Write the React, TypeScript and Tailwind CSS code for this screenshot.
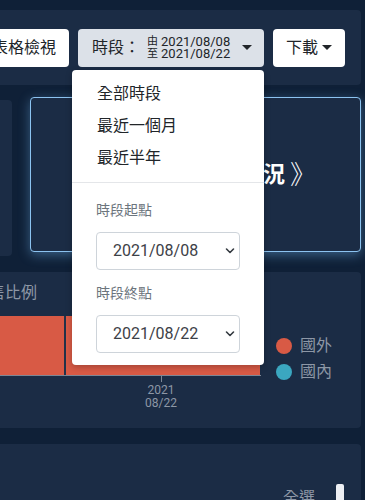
import React from "react";

const font = { fontFamily: "Roboto, 'Noto Sans CJK TC', sans-serif" };

const Caret = () => (
  <span className="inline-block w-0 h-0 border-l-[5px] border-r-[5px] border-t-[5px] border-l-transparent border-r-transparent border-t-[#212529]" />
);

const Chevron = () => (
  <svg width="10" height="7" viewBox="0 0 10 7" className="pointer-events-none absolute right-[5px] top-1/2 -translate-y-1/2">
    <path d="M1.5 1.5 L5 5 L8.5 1.5" fill="none" stroke="#343a40" strokeWidth="1.6" strokeLinecap="round" strokeLinejoin="round" />
  </svg>
);

const DateSelect = ({ value }: { value: string }) => (
  <div className="relative w-[144px] h-[38px]">
    <select
      defaultValue={value}
      className="appearance-none w-full h-full rounded-[4px] border border-[#ced4da] bg-white pl-[16px] text-[16px] text-[#3d4147] outline-none"
      style={font}
    >
      <option>2021/08/08</option>
      <option>2021/08/15</option>
      <option>2021/08/22</option>
    </select>
    <Chevron />
  </div>
);

export default function App() {
  return (
    <div className="w-[365px] h-[500px] overflow-hidden bg-[#0f2037]" style={font}>
      <div className="ml-[-40px] w-[401px] pt-[10px] flex flex-col">
        {/* toolbar */}
        <div className="relative z-20 h-[75px] rounded-[4px] bg-[#1b2c45] flex items-center justify-end gap-[9px] pr-[16px]">
          <button className="h-[38px] px-[13px] rounded-[4px] bg-white text-[16px] text-[#212529] whitespace-nowrap">表格檢視</button>
          <div className="relative">
            <button className="w-[186px] h-[38px] rounded-[4px] bg-[#dce1e8] flex items-center pl-[14px] pr-[12px] text-[#212529]">
              <span className="text-[16px] whitespace-nowrap">時段：</span>
              <span className="ml-[7px] flex flex-col items-start text-[13px] leading-[12px]">
                <span className="flex items-center gap-[3px]"><span className="text-[11px] leading-[12px]">由</span>2021/08/08</span>
                <span className="flex items-center gap-[3px]"><span className="text-[11px] leading-[12px]">至</span>2021/08/22</span>
              </span>
              <span className="ml-auto flex items-center"><Caret /></span>
            </button>
            {/* dropdown */}
            <div className="absolute right-0 top-[41px] w-[192px] rounded-[4px] bg-white py-[8px] shadow-[0_2px_6px_rgba(0,0,0,0.25)]">
              <div className="h-[32px] flex items-center px-[25px] text-[16px] text-[#212529]">全部時段</div>
              <div className="h-[32px] flex items-center px-[25px] text-[16px] text-[#212529]">最近一個月</div>
              <div className="h-[32px] flex items-center px-[25px] text-[16px] text-[#212529]">最近半年</div>
              <div className="my-[8px] border-t border-[#e4e6e9]" />
              <div className="px-[24px] pt-[9px] flex flex-col">
                <div className="h-[21px] text-[14px] text-[#6c757d] leading-[21px]">時段起點</div>
                <div className="mt-[11px]"><DateSelect value="2021/08/08" /></div>
                <div className="mt-[13px] h-[21px] text-[14px] text-[#6c757d] leading-[21px]">時段終點</div>
                <div className="mt-[11px] mb-[4px]"><DateSelect value="2021/08/22" /></div>
              </div>
            </div>
          </div>
          <button className="w-[72px] h-[38px] rounded-[4px] bg-white flex items-center justify-center gap-[4px] text-[16px] text-[#212529]">
            下載<Caret />
          </button>
        </div>

        {/* cards row */}
        <div className="mt-[12px] flex items-start gap-[18px]">
          <div className="mt-[3px] w-[52px] h-[156px] rounded-[4px] bg-[#1b2c45]" />
          <div className="w-[331px] h-[155px] pl-[12px] rounded-[4px] border border-[#8cc3f0] bg-[#1b2c45] shadow-[0_3px_12px_rgba(110,175,230,0.45)] flex items-center justify-center">
            <span className="flex items-center text-white whitespace-nowrap">
              <span className="text-[22px] font-bold">查看國內外銷售狀況</span>
              <span className="ml-[5px] text-[26px] leading-[26px] font-light">》</span>
            </span>
          </div>
        </div>

        {/* chart panel */}
        <div className="mt-[16px] h-[156px] rounded-[4px] bg-[#1b2c45] pl-[13px] pt-[11px]">
          <div className="text-[16px] leading-[20px] text-[#8d97a6]">銷售比例</div>
          <div className="mt-[13px] flex">
            <div className="w-[288px] flex flex-col">
              <div className="h-[59px] flex">
                <div className="w-[91px] bg-[#d85a45]" />
                <div className="w-[2px] bg-[#22324a]" />
                <div className="w-[194px] bg-[#d85a45]" />
              </div>
              <div className="h-[1px] bg-[#7d8795]" />
              <div className="ml-[147px] w-[82px] flex flex-col items-center">
                <div className="w-[1px] h-[6px] bg-[#7d8795]" />
                <div className="mt-[2px] text-[12px] leading-[13px] text-[#8d97a6] text-center">2021<br />08/22</div>
              </div>
            </div>
            <div className="ml-[15px] mt-[20px] flex flex-col gap-[6px]">
              <div className="flex items-center gap-[8px]">
                <span className="w-[16px] h-[16px] rounded-full bg-[#d85a45]" />
                <span className="text-[16px] leading-[20px] text-[#8d97a6]">國外</span>
              </div>
              <div className="flex items-center gap-[8px]">
                <span className="w-[16px] h-[16px] rounded-full bg-[#3ba7c0]" />
                <span className="text-[16px] leading-[20px] text-[#8d97a6]">國內</span>
              </div>
            </div>
          </div>
        </div>

        {/* bottom panel */}
        <div className="mt-[16px] h-[80px] rounded-[4px] bg-[#1b2c45] flex items-start justify-end pr-[17px] pt-[40px]">
          <span className="mt-[2px] text-[16px] text-[#8d97a6]">全選</span>
          <span className="ml-[21px] w-[8px] h-[30px] rounded-[2px] bg-[#eef0f4]" />
        </div>
      </div>
    </div>
  );
}
